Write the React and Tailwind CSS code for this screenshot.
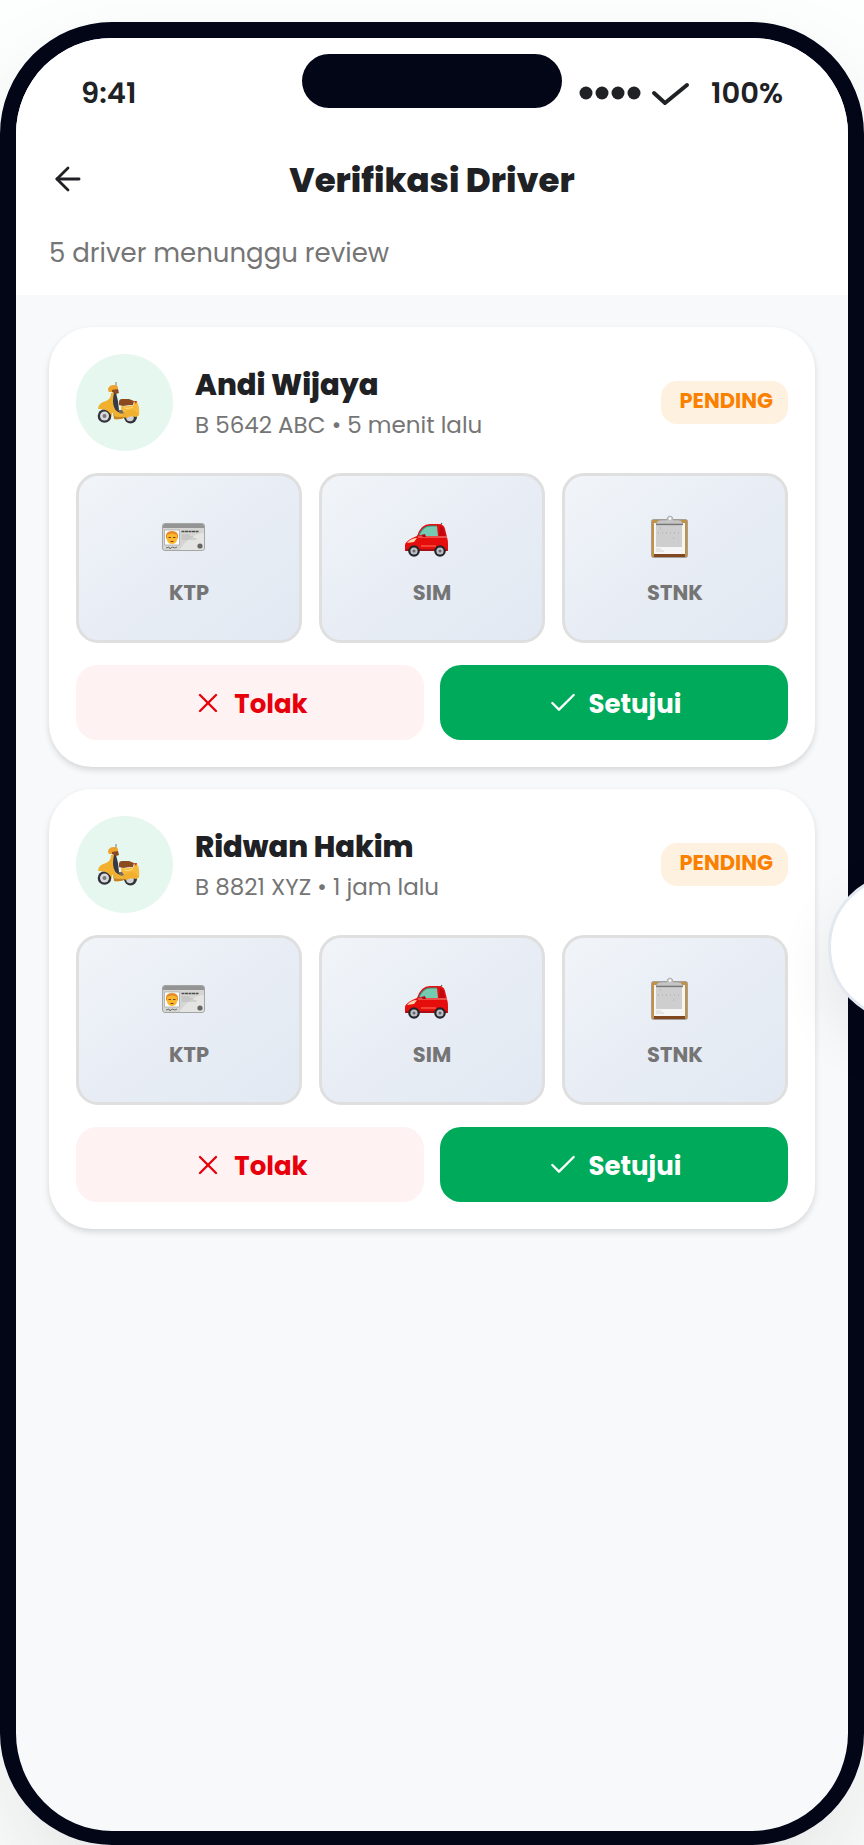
import React from "react";
import { ArrowLeft, Check, X } from "lucide-react";

const drivers = [
  { name: "Andi Wijaya", plate: "B 5642 ABC", time: "5 menit lalu" },
  { name: "Ridwan Hakim", plate: "B 8821 XYZ", time: "1 jam lalu" },
];

function ScooterIcon() {
  return (
    <svg width="56" height="44" viewBox="0 0 56 44" aria-hidden="true">
      <path d="M19 1v9" stroke="#8b8f94" strokeWidth="1.200" />
      <circle cx="33.500" cy="36" r="6.500" fill="#33343b" />
      <circle cx="33" cy="36.500" r="3.800" fill="#d0d2d5" />
      <path d="M16 12l3 0 2 8 1 9q3 3 7 3l-3 4H17l-3-12z" fill="#363a48" />
      <path d="M11 8q1-4 6-4 4 0 4 3l-1 3-3 1-5 0q-1-1-1-3z" fill="#eda32d" />
      <path d="M15 9l6-1 1 4-3 1-4-2z" fill="#8b4a20" />
      <path d="M13 12l4 0q-2 9 0 14 2 6 9 6l1 5q-5 2-10 1 0-8-7-10-4-1-9 0 0-6 8-8 5-2 5-8z" fill="#f2b02f" />
      <path d="M17 35q5 2 10 0v2q-5 2-10 1z" fill="#c88525" />
      <path d="M22 21q0-3 3-3h7l5 2-1 4q-5 0-10 1l-4-1z" fill="#8b4a20" />
      <path d="M24 25q7 1 13-1v-4l3 1q3 5 2 13l-2 2q-2-6-8-6-5 0-6 6-3-1-3-5 2-3 1-6z" fill="#f6b93b" />
      <path d="M26 36q1-7 8-7 5 0 8 5l-3 2q-6-2-9 1z" fill="#f2b02f" />
      <path d="M21 29h4l2 3-3 1z" fill="#746b60" />
      <path d="M27 27q5 1 9-1" stroke="#ffdb7c" strokeWidth="1.200" fill="none" />
      <circle cx="7.500" cy="35" r="6.800" fill="#33343b" />
      <circle cx="7.500" cy="35" r="4.500" fill="#d7d9dc" />
      <circle cx="7.500" cy="35" r="2" fill="#76787e" />
      <path d="M1 28q3-6 9-6l5 5 0 9q-3-9-14-8z" fill="#f2b02f" />
      <path d="M37 20l3 0-1 3z" fill="#c83a25" />
    </svg>
  );
}

function CardIcon() {
  return (
    <svg width="54" height="44" viewBox="0 0 54 44" aria-hidden="true">
      <rect x="0.500" y="8.500" width="42" height="27" rx="2.500" fill="#d5d5d3" stroke="#a5a5a5" />
      <path d="M1 13V11q0-2 2-2h37q2 0 2 2v2z" fill="#949494" />
      <path d="M18 34q12-16 24-16v14q0 3-3 3H18z" fill="#e4e4e2" />
      <rect x="2.500" y="15" width="15" height="15" fill="#fff" stroke="#aaa" strokeWidth="0.800" />
      <path d="M4 23q-1-7 6-7t6 7l-2 3H6z" fill="#e58a2a" />
      <path d="M5 20q5-3 10 0v5q-1 4-5 4t-5-4z" fill="#fbb82e" />
      <path d="M6.500 22.500h2.500m2 0h2.500M8.500 26.500h3" stroke="#7b451b" strokeWidth="1" />
      <path d="M19.500 16.500h17" stroke="#4c4c4c" strokeWidth="1.500" strokeDasharray="3 .5" />
      <path d="M19.500 20h8m-8 2h12m-12 2h15" stroke="#b5b5b5" strokeWidth="0.900" />
      <path d="M4 33l3-1 1 2 2-2 3 1 2-1" stroke="#656565" strokeWidth="0.900" fill="none" />
      <circle cx="38" cy="31" r="2.600" fill="#656565" />
    </svg>
  );
}

function CarIcon() {
  return (
    <svg width="54" height="44" viewBox="0 0 54 44" aria-hidden="true">
      <path d="M35 11l2-3" stroke="#555" strokeWidth="1.200" />
      <path d="M0 36V30q1-5 12-9 4-12 13-12h8q6 0 7 5l2 8q1 3 1 8v6z" fill="#e60d0d" />
      <path d="M14 20q4-9 11-9h7l1 10H20z" fill="#75cbb2" />
      <path d="M14 20q4-9 11-9h7" fill="none" stroke="#3e8d7f" strokeWidth="1.200" />
      <path d="M35 11q4 1 4 5l1 5h-6z" fill="#c20710" />
      <path d="M13 22h29" stroke="#f5a092" strokeWidth="0.900" />
      <path d="M2 28q4-5 10-5l-3 4z" fill="#ffd3ae" />
      <path d="M16 31h15" stroke="#ff654c" strokeWidth="1.200" />
      <path d="M16 20l4-1 1 3h-3z" fill="#ad0714" />
      <path d="M1 35h41" stroke="#8e1219" strokeWidth="1.500" />
      <circle cx="9" cy="36" r="5.800" fill="#24252a" />
      <circle cx="9" cy="36" r="3.600" fill="#bdc0c5" />
      <circle cx="9" cy="36" r="1.500" fill="#66686d" />
      <circle cx="35" cy="36" r="5.800" fill="#24252a" />
      <circle cx="35" cy="36" r="3.600" fill="#bdc0c5" />
      <circle cx="35" cy="36" r="1.500" fill="#66686d" />
    </svg>
  );
}

function ClipboardIcon() {
  return (
    <svg width="54" height="44" viewBox="0 0 54 44" aria-hidden="true">
      <rect x="3.500" y="4.500" width="36" height="38" rx="2" fill="#c29144" stroke="#a5a09a" />
      <path d="M6 39h31v3H6z" fill="#814720" />
      <path d="M6 8h31v31H6z" fill="#f5f5f5" />
      <path d="M8 10h26v22H8z" fill="#cecece" />
      <path d="M10 18h22M12 13h2m11 10h2" stroke="#aaa" strokeWidth="1" strokeDasharray="1 3" />
      <path d="M8 34h5m-5 2h8" stroke="#ccc" strokeWidth="0.800" />
      <path d="M8 9h27l-1-2q-1-2-4-2h-5q0-4-3-4t-3 4h-6q-3 0-4 2z" fill="#c5c5c5" stroke="#9b9b9b" strokeWidth="0.600" />
      <path d="M8 9.500h27" stroke="#777" strokeWidth="1.300" />
      <circle cx="22" cy="3.500" r="1.300" fill="#fff" />
    </svg>
  );
}

const documents = [
  { label: "KTP", Icon: CardIcon },
  { label: "SIM", Icon: CarIcon },
  { label: "STNK", Icon: ClipboardIcon },
];

function StatusBar() {
  return (
    <div className="relative flex items-center justify-between px-[65px] pt-[35px] text-[29px] leading-[40px] font-semibold">
      <span>9:41</span>
      <div className="absolute top-4 left-1/2 h-[54px] w-[260px] -translate-x-1/2 rounded-full bg-[#020617]" />
      <div className="flex items-center">
        <svg width="112" height="26" viewBox="0 0 112 26" aria-hidden="true">
          <g fill="currentColor">
            <circle cx="7" cy="13" r="6.500" />
            <circle cx="23" cy="13" r="6.500" />
            <circle cx="39" cy="13" r="6.500" />
            <circle cx="55" cy="13" r="6.500" />
          </g>
          <path d="M75 13l11 10 22-18" fill="none" stroke="currentColor" strokeWidth="4" strokeLinecap="round" strokeLinejoin="round" />
        </svg>
        <span className="ml-5">100%</span>
      </div>
    </div>
  );
}

function DriverCard({ driver }) {
  return (
    <article className="flex flex-col gap-[22px] rounded-[43px] bg-white p-[27px] shadow-[0_3px_6px_rgba(0,0,0,0.14)]">
      <div className="flex items-center">
        <div className="flex size-[97px] shrink-0 items-center justify-center rounded-full bg-[#e5f7ef]">
          <ScooterIcon />
        </div>
        <div className="ml-[22px] min-w-0 flex-1 pt-1">
          <h2 className="text-[29px] leading-[40px] font-extrabold">{driver.name}</h2>
          <p className="text-[23px] leading-[40px] text-[#757575]">
            {driver.plate} • {driver.time}
          </p>
        </div>
        <span className="rounded-2xl bg-[#fff1df] pt-[5px] pr-[15px] pb-[8px] pl-[18px] text-[21px] leading-[30px] font-bold text-[#fa8000]">
          PENDING
        </span>
      </div>
      <div className="grid grid-cols-3 gap-[17px]">
        {documents.map(({ label, Icon }) => (
          <button
            key={label}
            type="button"
            className="flex h-[170px] flex-col items-center justify-center gap-[19px] rounded-[22px] border-[3px] border-[#dfdfdf] bg-linear-to-br from-[#f1f5f9] via-[#e8edf5] to-[#e2e9f2] pt-[7px] text-[21px] leading-[30px] font-bold text-[#757575]"
          >
            <Icon />
            {label}
          </button>
        ))}
      </div>
      <div className="grid grid-cols-2 gap-4 text-[26px] leading-[40px] font-bold">
        <button type="button" className="flex h-[75px] items-center justify-center gap-[10px] rounded-[21px] bg-[#fef2f2] text-[#e7000b]">
          <X size={32} strokeWidth={1.75} aria-hidden="true" />
          <span className="pt-[2px]">Tolak</span>
        </button>
        <button type="button" className="flex h-[75px] items-center justify-center gap-[10px] rounded-[21px] bg-[#00aa5b] text-white">
          <Check size={32} strokeWidth={1.75} aria-hidden="true" />
          <span className="pt-[2px]">Setujui</span>
        </button>
      </div>
    </article>
  );
}

export default function App() {
  return (
    <div className="relative flex min-h-screen flex-col overflow-hidden bg-[#fdfffe] pt-[22px] font-['Poppins','Inter',sans-serif] text-[#202124]">
      <div className="flex flex-1 flex-col overflow-hidden rounded-[112px] border-[16px] border-b-[14px] border-[#020617] bg-[#f8f9fb] shadow-[0_50px_100px_rgba(15,23,42,0.1)]">
        <header className="bg-white pb-[22px]">
          <StatusBar />
          <div className="grid grid-cols-[38px_1fr_38px] items-center px-[33px] pt-[41px]">
            <button type="button" aria-label="Kembali">
              <ArrowLeft size={38} strokeWidth={1.75} aria-hidden="true" />
            </button>
            <h1 className="pt-[2px] text-center text-[34px] leading-[48px] font-extrabold">Verifikasi Driver</h1>
          </div>
          <p className="px-[33px] pt-[29px] text-[26px] leading-[40px] text-[#757575]">5 driver menunggu review</p>
        </header>
        <main className="flex flex-col gap-[22px] px-[33px] py-8">
          {drivers.map((driver) => (
            <DriverCard key={driver.name} driver={driver} />
          ))}
        </main>
      </div>
      <button
        type="button"
        aria-label="Berikutnya"
        className="absolute top-[874px] -right-[110px] size-[146px] rounded-full border-[3px] border-[#e2e8f0] bg-white shadow-[0_24px_60px_rgba(0,0,0,0.08)]"
      />
    </div>
  );
}
